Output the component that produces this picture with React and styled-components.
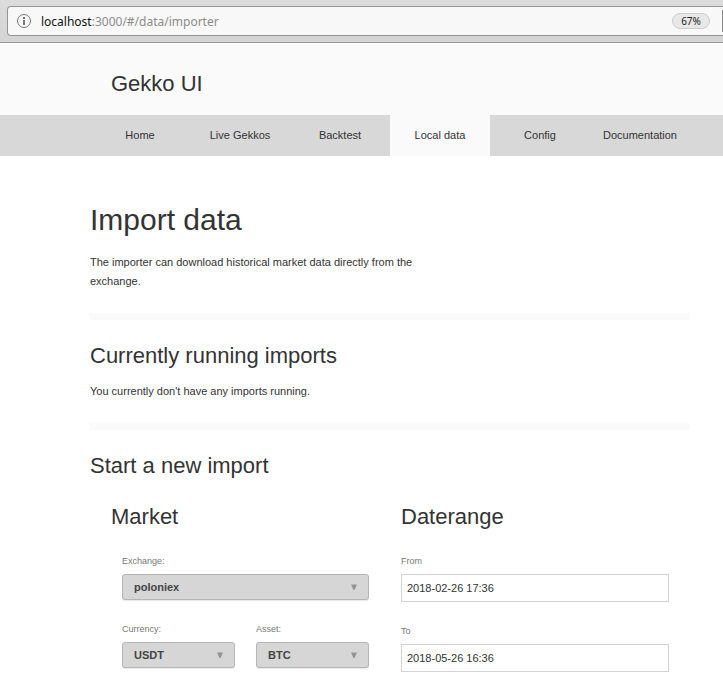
import React from "react";
import styled, { createGlobalStyle } from "styled-components";

const GlobalStyle = createGlobalStyle`
  *, *::before, *::after { box-sizing: border-box; }
  body {
    margin: 0;
    background: #fff;
    color: #333;
    font-family: "Liberation Sans", Arial, sans-serif;
    font-size: 11px;
    line-height: 19px;
  }
  h1, h2, h3, p { margin: 0; font-weight: 400; }
`;

const Toolbar = styled.div`
  height: 43px;
  padding: 6px 0 0 7px;
  background: linear-gradient(#dcdcdc, #d4d4d4);
  border-bottom: 1px solid #959595;
`;

const AddressBar = styled.div`
  display: flex;
  align-items: center;
  height: 30px;
  padding-left: 8px;
  background: #f8f8f8;
  border: 1px solid #959595;
  border-right: 0;
  border-radius: 4px 0 0 4px;
`;

const InfoIcon = styled.svg`
  width: 16px;
  height: 16px;
  margin-right: 9px;
`;

const Url = styled.div`
  flex: 1;
  color: #8c8c8c;
  font-family: "Noto Sans", sans-serif;
  font-size: 12px;
`;

const Host = styled.span`
  color: #111;
`;

const Zoom = styled.button`
  width: 38px;
  height: 16px;
  margin-right: 12px;
  padding: 0;
  color: #222;
  background: #e8e8e8;
  border: 1px solid #ccc;
  border-radius: 8px;
  font-family: "Noto Sans", sans-serif;
  font-size: 10px;
  line-height: 14px;
`;

const Separator = styled.span`
  width: 1px;
  height: 22px;
  background: #8a8a8a;
`;

const Header = styled.header`
  padding: 29px 111px 19px;
  background: #fafafa;
`;

const Brand = styled.h3`
  font-size: 22px;
  line-height: 24px;
`;

const Nav = styled.nav`
  display: flex;
  padding-left: 90px;
  background: #d8d8d8;
`;

const NavLink = styled.a`
  width: 100px;
  padding: 11px 0;
  color: #333;
  background: ${(p) => (p.$active ? "#fafafa" : "transparent")};
  text-align: center;
  text-decoration: none;
`;

const Main = styled.main`
  padding: 44px 33px 24px 90px;
`;

const Title = styled.h1`
  margin-bottom: 13px;
  font-size: 30px;
  line-height: 40px;
`;

const Text = styled.p`
  max-width: 340px;
`;

const Divider = styled.hr`
  height: 7px;
  margin: 22px 0;
  background: #fafafa;
  border: 0;
`;

const Heading = styled.h2`
  margin-bottom: 12px;
  font-size: 22px;
  line-height: 28px;
`;

const Form = styled.form`
  display: grid;
  grid-template-columns: 1fr 1fr;
  gap: 22px;
  padding: 11px 21px 0;
`;

const GroupTitle = styled.h3`
  margin-bottom: 20px;
  font-size: 22px;
  line-height: 28px;
`;

const MarketFields = styled.div`
  display: grid;
  grid-template-columns: 1fr 1fr;
  gap: 19px 21px;
  padding: 0 10px 0 11px;
`;

const DateFields = styled.div`
  display: grid;
  gap: 19px;
`;

const Field = styled.div`
  display: flex;
  flex-direction: column;
  grid-column: ${(p) => (p.$wide ? "1 / -1" : "auto")};
`;

const Label = styled.label`
  height: 23px;
  color: #777;
  font-size: 9px;
  line-height: 20px;
`;

const SelectBox = styled.div`
  display: grid;
  align-items: center;
  justify-items: end;

  > * { grid-area: 1 / 1; }
`;

const Select = styled.select`
  appearance: none;
  width: 100%;
  height: 26px;
  padding: 0 24px 0 11px;
  color: #444;
  background: #d6d6d6;
  border: 1px solid #b5b5b5;
  border-radius: 3px;
  box-shadow: 0 1px 1px #e8e8e8;
  font-family: inherit;
  font-size: 11px;
  font-weight: 700;
`;

const Arrow = styled.svg`
  width: 6px;
  height: 6px;
  margin-right: 12px;
  pointer-events: none;
`;

const DateInput = styled.input`
  width: 100%;
  height: 28px;
  padding: 0 5px;
  color: #333;
  background: #fff;
  border: 1px solid #d3d3d3;
  border-radius: 0;
  font-family: inherit;
  font-size: 11px;
`;

const links = ["Home", "Live Gekkos", "Backtest", "Local data", "Config", "Documentation"];

function Dropdown({ id, label, value, wide }) {
  return (
    <Field $wide={wide}>
      <Label htmlFor={id}>{label}</Label>
      <SelectBox>
        <Select id={id} defaultValue={value}>
          <option>{value}</option>
        </Select>
        <Arrow viewBox="0 0 6 6" aria-hidden="true">
          <path d="M0 0.5H6L3.5 6H2.5Z" fill="#949494" />
        </Arrow>
      </SelectBox>
    </Field>
  );
}

function DateField({ id, label, value }) {
  return (
    <Field>
      <Label htmlFor={id}>{label}</Label>
      <DateInput id={id} type="text" defaultValue={value} />
    </Field>
  );
}

export default function App() {
  return (
    <>
      <GlobalStyle />
      <Toolbar>
        <AddressBar>
          <InfoIcon viewBox="0 0 16 16" aria-hidden="true">
            <circle cx="8" cy="8" r="6.5" fill="none" stroke="#777" />
            <path d="M7 4H9V6H7ZM7 7H9V12H7Z" fill="#777" />
          </InfoIcon>
          <Url>
            <Host>localhost</Host>:3000/#/data/importer
          </Url>
          <Zoom type="button">67%</Zoom>
          <Separator />
        </AddressBar>
      </Toolbar>
      <Header>
        <Brand>Gekko UI</Brand>
      </Header>
      <Nav>
        {links.map((name) => (
          <NavLink key={name} href="#" $active={name === "Local data"}>
            {name}
          </NavLink>
        ))}
      </Nav>
      <Main>
        <Title>Import data</Title>
        <Text>
          The importer can download historical market data directly from the exchange.
        </Text>
        <Divider />
        <Heading>Currently running imports</Heading>
        <Text>You currently don't have any imports running.</Text>
        <Divider />
        <Heading>Start a new import</Heading>
        <Form>
          <section>
            <GroupTitle>Market</GroupTitle>
            <MarketFields>
              <Dropdown id="exchange" label="Exchange:" value="poloniex" wide />
              <Dropdown id="currency" label="Currency:" value="USDT" />
              <Dropdown id="asset" label="Asset:" value="BTC" />
            </MarketFields>
          </section>
          <section>
            <GroupTitle>Daterange</GroupTitle>
            <DateFields>
              <DateField id="from" label="From" value="2018-02-26 17:36" />
              <DateField id="to" label="To" value="2018-05-26 16:36" />
            </DateFields>
          </section>
        </Form>
      </Main>
    </>
  );
}
